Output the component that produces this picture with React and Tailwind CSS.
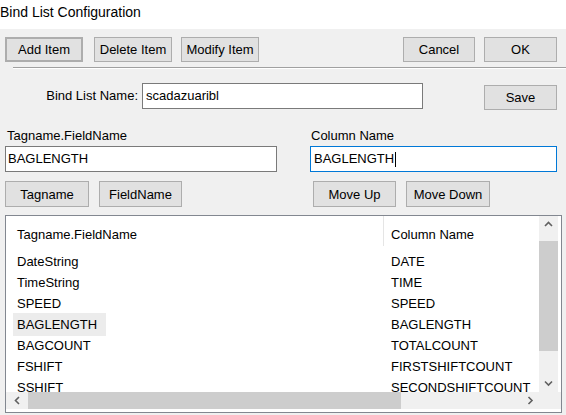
import React from "react";

const rows = [
  ["DateString", "DATE"],
  ["TimeString", "TIME"],
  ["SPEED", "SPEED"],
  ["BAGLENGTH", "BAGLENGTH"],
  ["BAGCOUNT", "TOTALCOUNT"],
  ["FSHIFT", "FIRSTSHIFTCOUNT"],
  ["SSHIFT", "SECONDSHIFTCOUNT"],
];

function Btn({ children, className = "" }) {
  return (
    <button
      type="button"
      className={`flex items-center justify-center border border-[#adadad] bg-[#e1e1e1] text-[13px] leading-none text-black ${className}`}
    >
      {children}
    </button>
  );
}

function Arrow({ dir }) {
  const d = {
    up: "M1 5 L4.5 1.5 L8 5",
    down: "M1 1.5 L4.5 5 L8 1.5",
    left: "M5 1 L1.5 4.5 L5 8",
    right: "M1.5 1 L5 4.5 L1.5 8",
  }[dir];
  const vertical = dir === "up" || dir === "down";
  return (
    <svg width={vertical ? 9 : 7} height={vertical ? 7 : 9} viewBox={vertical ? "0 0 9 7" : "0 0 7 9"}>
      <path d={d} fill="none" stroke="#606060" strokeWidth="1.6" />
    </svg>
  );
}

export default function App() {
  return (
    <div
      className="w-[566px] h-[415px] overflow-hidden bg-[#f0f0f0] text-black"
      style={{ fontFamily: "'Liberation Sans', Arial, sans-serif" }}
    >
      <div className="h-[29px] bg-white pt-[3px] text-[14px] leading-[18px]">Bind List Configuration</div>

      {/* toolbar */}
      <div className="flex pt-[8px] pl-[5px] pr-[9px]">
        <Btn className="h-[25px] w-[78px] border-2 border-[#0078d7]">Add Item</Btn>
        <Btn className="ml-[11px] h-[25px] w-[78px]">Delete Item</Btn>
        <Btn className="ml-[9px] h-[25px] w-[78px]">Modify Item</Btn>
        <div className="flex-1" />
        <Btn className="h-[25px] w-[72px]">Cancel</Btn>
        <Btn className="ml-[9px] h-[25px] w-[73px]">OK</Btn>
      </div>
      <div className="ml-[13px] mt-[5px] h-px bg-[#a0a0a0]" />
      <div className="ml-[13px] h-px bg-white" />

      {/* bind list name */}
      <div className="mt-[14px] flex pr-[9px]">
        <div className="w-[139px] pr-[1px] pt-[5px] text-right text-[13px] leading-[15px]">Bind List Name:</div>
        <div className="ml-[3px] flex h-[26px] w-[281px] items-center border border-[#7a7a7a] bg-white pl-[3px] text-[13px]">
          scadazuaribl
        </div>
        <div className="flex-1" />
        <Btn className="mt-[2px] h-[25px] w-[73px]">Save</Btn>
      </div>

      {/* field editors */}
      <div className="mt-[18px] flex">
        <div className="ml-[5px] w-[272px]">
          <div className="pl-[2px] text-[13px] leading-[15px]">Tagname.FieldName</div>
          <div className="mt-[3px] flex h-[26px] items-center border border-[#7a7a7a] bg-white pl-[2px] text-[13px]">
            BAGLENGTH
          </div>
          <div className="mt-[9px] flex">
            <Btn className="h-[26px] w-[84px]">Tagname</Btn>
            <Btn className="ml-[10px] h-[26px] w-[83px]">FieldName</Btn>
          </div>
        </div>
        <div className="ml-[33px] w-[247px]">
          <div className="pl-[1px] text-[13px] leading-[15px]">Column Name</div>
          <div className="mt-[3px] flex h-[26px] items-center border border-[#0078d7] bg-white pl-[3px] text-[13px]">
            BAGLENGTH<span className="ml-px inline-block h-[15px] w-px bg-black" />
          </div>
          <div className="mt-[9px] flex pl-[3px]">
            <Btn className="h-[26px] w-[83px]">Move Up</Btn>
            <Btn className="ml-[10px] h-[26px] w-[84px]">Move Down</Btn>
          </div>
        </div>
      </div>

      {/* list view */}
      <div className="ml-[5px] mt-[8px] flex h-[198px] w-[557px] flex-col border border-[#828790] bg-white">
        <div className="flex h-[176px]">
          <div className="flex-1 overflow-hidden">
            <div className="flex h-[35px] text-[13px]">
              <div className="w-[377px] pl-[11px] pt-[9px]">Tagname.FieldName</div>
              <div className="h-[30px] w-px bg-[#e5e5e5]" />
              <div className="pl-[7px] pt-[9px] whitespace-nowrap">Column Name</div>
            </div>
            {rows.map(([tag, col]) => (
              <div key={tag} className="flex h-[21px] items-center whitespace-nowrap text-[13px]">
                <div className="w-[378px] pl-[7px]">
                  <span className={`inline-block px-[4px] py-[2px] ${tag === "BAGLENGTH" ? "w-[93px] bg-[#ececec]" : ""}`}>
                    {tag}
                  </span>
                </div>
                <div className="pl-[7px]">{col}</div>
              </div>
            ))}
          </div>
          <div className="flex w-[19px] flex-col bg-[#f0f0f0]">
            <div className="flex h-[17px] items-center justify-center">
              <Arrow dir="up" />
            </div>
            <div className="flex-1 pt-[8px] pb-[24px]">
              <div className="h-full bg-[#cdcdcd]" />
            </div>
            <div className="flex h-[17px] items-center justify-center">
              <Arrow dir="down" />
            </div>
          </div>
          <div className="w-[3px]" />
        </div>
        <div className="flex h-[17px] bg-[#f0f0f0]">
          <div className="flex w-[22px] items-center justify-center">
            <Arrow dir="left" />
          </div>
          <div className="h-full w-[373px] bg-[#cdcdcd]" />
          <div className="flex-1" />
          <div className="flex w-[17px] items-center justify-center">
            <Arrow dir="right" />
          </div>
          <div className="w-[22px] bg-[#f0f0f0]" />
        </div>
      </div>
    </div>
  );
}
